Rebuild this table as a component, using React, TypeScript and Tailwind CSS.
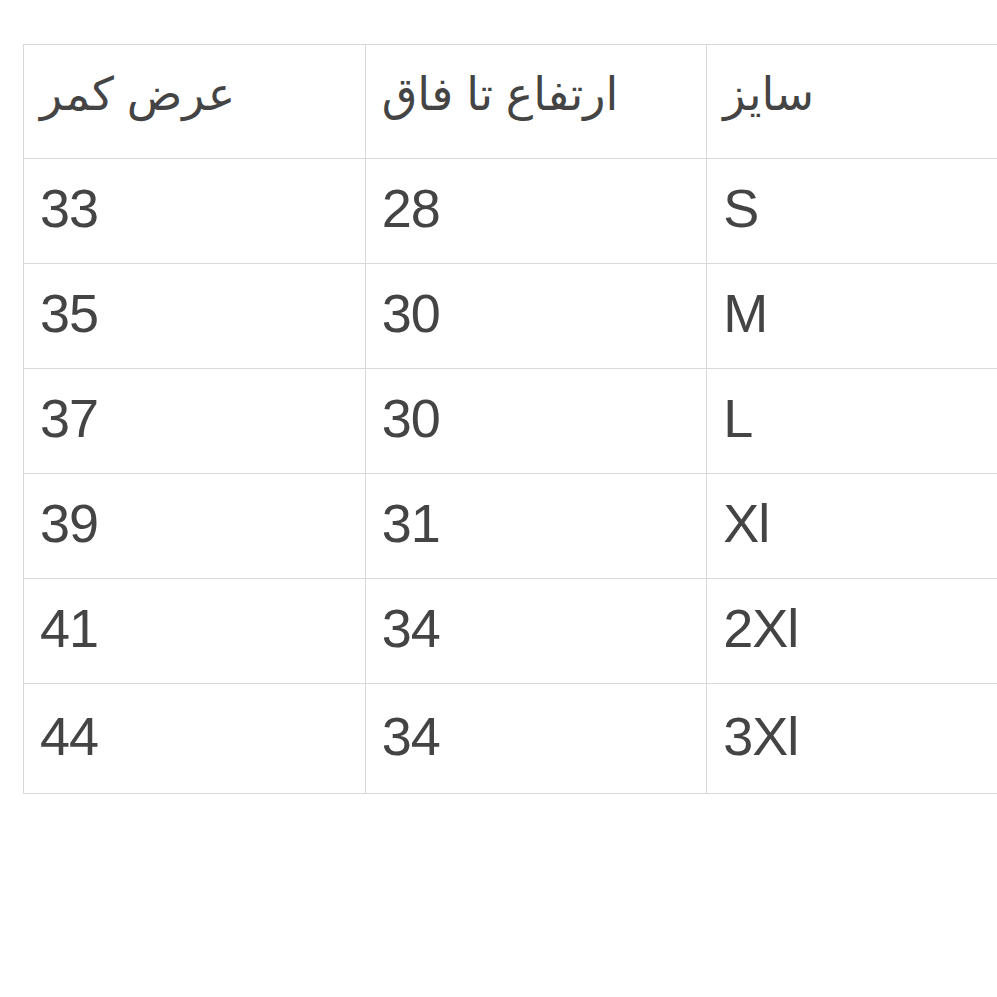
const header = ["عرض کمر", "ارتفاع تا فاق", "سایز"];

const rows: [string, string, string][] = [
  ["33", "28", "S"],
  ["35", "30", "M"],
  ["37", "30", "L"],
  ["39", "31", "Xl"],
  ["41", "34", "2Xl"],
  ["44", "34", "3Xl"],
];

export default function App() {
  return (
    <div
      className="h-[997px] w-[997px] overflow-hidden bg-white pl-[23px] pt-[44px] text-[#444444]"
      style={{ fontFamily: '"Liberation Sans", "DejaVu Sans", sans-serif' }}
    >
      <table className="w-[1026px] table-fixed border-collapse">
        <thead>
          <tr className="h-[114px]">
            {header.map((h) => (
              <th
                key={h}
                className="border border-[#d9d9d9] px-[16px] pb-[14px] text-left align-middle text-[46px] font-normal"
              >
                {h}
              </th>
            ))}
          </tr>
        </thead>
        <tbody>
          {rows.map((r, i) => (
            <tr key={r[2]} className={i === rows.length - 1 ? "h-[110px]" : "h-[105px]"}>
              {r.map((c, j) => (
                <td
                  key={j}
                  className="border border-[#d9d9d9] px-[16px] pb-[6px] align-middle text-[54px] leading-none tracking-[-1px]"
                >
                  {c}
                </td>
              ))}
            </tr>
          ))}
        </tbody>
      </table>
    </div>
  );
}
